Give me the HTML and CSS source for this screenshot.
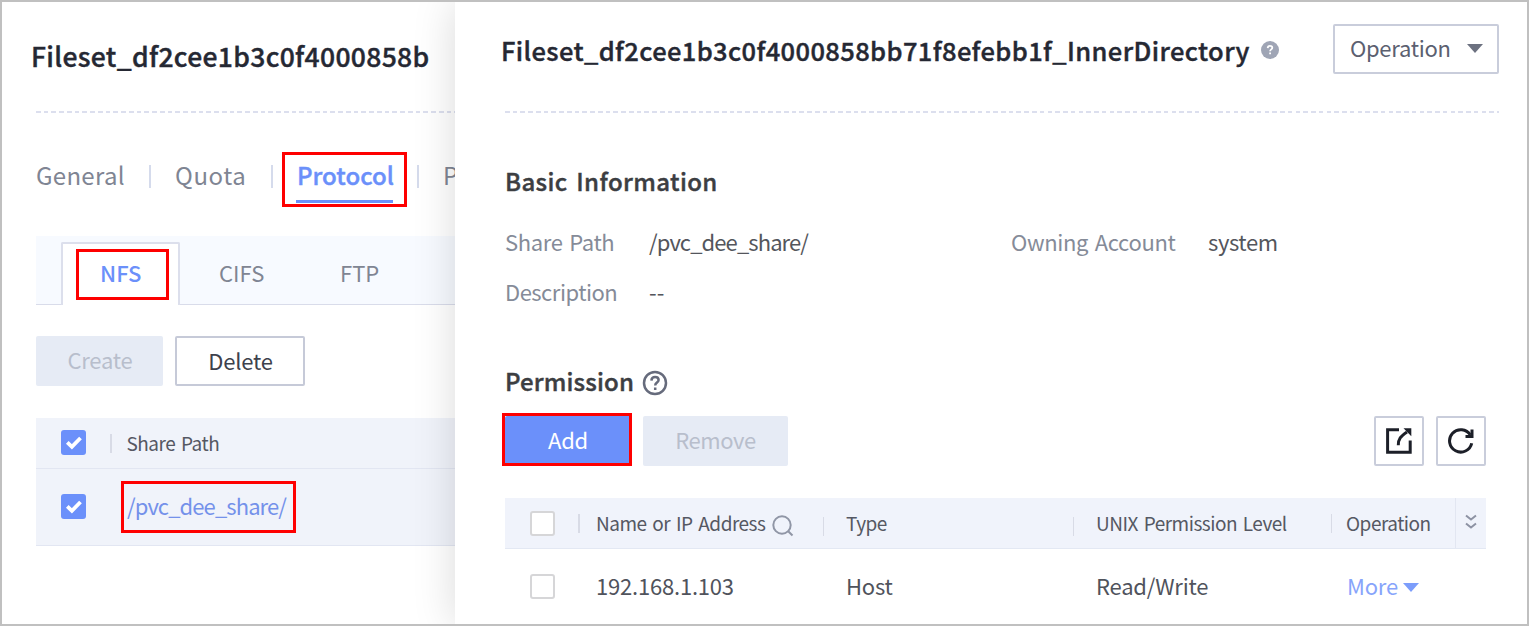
FILE: index.html
```html
<!DOCTYPE html>
<html lang="en">
<head>
<meta charset="utf-8">
<title>Fileset</title>
<link rel="stylesheet" href="styles.css">
</head>
<body>
<div class="frame">
  <section class="page">
    <h1 class="page-title">Fileset_df2cee1b3c0f4000858b</h1>
    <div class="rule"></div>
    <nav class="tabs">
      <span class="tab general">General</span>
      <span class="tab quota">Quota</span>
      <span class="tab protocol active mark">Protocol</span>
      <span class="tab next">P</span>
    </nav>
    <div class="subtabs">
      <div class="subtab active"><span class="mark">NFS</span></div>
      <div class="subtab">CIFS</div>
      <div class="subtab ftp">FTP</div>
      <div class="subtab-fill"></div>
    </div>
    <div class="actions">
      <button class="btn create" disabled>Create</button>
      <button class="btn delete">Delete</button>
    </div>
    <div class="share-table">
      <div class="share-row head">
        <span class="check"><svg viewBox="0 0 25 25"><path d="M6.300 12.400l4.600 4.400 8.600-8.800"/></svg></span>
        <span class="sep"></span>
        <span class="head-text">Share Path</span>
      </div>
      <div class="share-row">
        <span class="check"><svg viewBox="0 0 25 25"><path d="M6.300 12.400l4.600 4.400 8.600-8.800"/></svg></span>
        <span class="link mark path">/pvc_dee_share/</span>
      </div>
    </div>
  </section>

  <section class="drawer">
    <header class="drawer-head">
      <h2 class="drawer-title">Fileset_df2cee1b3c0f4000858bb71f8efebb1f_InnerDirectory</h2>
      <svg class="help-solid" viewBox="0 0 18 18"><circle cx="9" cy="9" r="9"/><path d="M6.7 7.1c.1-1.5 1-2.2 2.3-2.2s2.3.8 2.3 1.9c0 1.6-2.2 1.6-2.2 3.4M9.1 11.6v1.6"/></svg>
      <button class="btn operation">Operation<i class="caret"></i></button>
    </header>
    <div class="rule"></div>
    <h3 class="section basic">Basic Information</h3>
    <dl class="info">
      <dt>Share Path</dt><dd class="path">/pvc_dee_share/</dd>
      <dt>Owning Account</dt><dd class="owner">system</dd>
      <dt class="desc">Description</dt><dd>--</dd>
    </dl>
    <h3 class="section perm">Permission
      <svg class="help-line" viewBox="0 0 26 26"><circle cx="13" cy="13" r="11"/><path d="M9.4 10.6c.2-2.3 1.6-3.5 3.7-3.5 2 0 3.5 1.2 3.5 3 0 2.400-3.400 2.500-3.400 5.300M13.200 17.600v2.400"/></svg>
    </h3>
    <div class="toolbar">
      <button class="btn add mark">Add</button>
      <button class="btn remove" disabled>Remove</button>
      <button class="icon-btn export"><svg viewBox="0 0 26 26"><path d="M13 1.800H1.600v22.500h22.600V12.500M12.300 17.200C12.300 11 14.500 8.500 21 4"/><path class="solid" d="M17.500 .2h7.800v8z"/></svg></button>
      <button class="icon-btn"><svg viewBox="0 0 26 26"><path d="M23.700 15.200A11.200 11.200 0 1 1 22.300 7"/><path d="M24 1.500v7H17.500"/></svg></button>
    </div>
    <div class="perm-table">
      <div class="perm-row head">
        <span class="cell c-check"><span class="box"></span><span class="sep"></span></span>
        <span class="cell c-name">Name or IP Address
          <svg class="search" viewBox="0 0 22 22"><circle cx="10" cy="10" r="8.700"/><path d="M16.200 16.200l4.300 4.300"/></svg>
          <span class="sep low"></span></span>
        <span class="cell c-type">Type<span class="sep low"></span></span>
        <span class="cell c-level">UNIX Permission Level<span class="sep"></span></span>
        <span class="cell c-op">Operation</span>
        <span class="cell c-more"><svg viewBox="0 0 12 16"><path d="M1 1.500l5 4 5-4M1 9.500l5 4 5-4"/></svg></span>
      </div>
      <div class="perm-row">
        <span class="cell c-check"><span class="box"></span></span>
        <span class="cell c-name">192.168.1.103</span>
        <span class="cell c-type">Host</span>
        <span class="cell c-level">Read/Write</span>
        <span class="cell c-op link">More<i class="caret"></i></span>
      </div>
    </div>
  </section>
</div>
</body>
</html>
```
FILE: styles.css
```css
* { box-sizing: border-box; }
body {
  margin: 0;
  font: 400 22px/30px "Noto Sans CJK SC", "Noto Sans", sans-serif;
  color: #4a4d55;
  background: #fff;
}
h1, h2, h3, dl, dd { margin: 0; }
button { font: inherit; letter-spacing: inherit; padding: 0; border-radius: 2px; }
svg { display: block; fill: none; flex: none; }

.frame {
  display: flex;
  width: 1529px;
  height: 626px;
  border: 2px solid #c0c0c0;
  overflow: hidden;
  white-space: nowrap;
}
.rule {
  height: 2px;
  background: repeating-linear-gradient(90deg, #dcdfee 0 4.600px, transparent 4.600px 7.750px);
}

/* Red highlight frame laid over an element */
.mark { position: relative; }
.mark::after {
  content: "";
  position: absolute;
  inset: 0;
  border: 3px solid #fe0000;
}

/* Left page */
.page { flex: 0 0 453px; padding-left: 34px; overflow: hidden; }
.page-title {
  height: 109px;
  padding-bottom: 2px;
  margin-left: -5px;
  font-size: 26.500px;
  font-weight: 500;
  line-height: 107px;
  letter-spacing: .320px;
  color: #252833;
}
.page-title, .drawer-title, .section, .protocol { -webkit-text-stroke: .400px currentColor; }
.tabs { display: flex; height: 46px; margin-top: 44px; line-height: 35px; font-size: 24px; color: #7f8593; }
.tab { display: flex; align-items: flex-start; flex: none; letter-spacing: .300px; }
.tab::before {
  content: "";
  width: 1.500px;
  height: 23px;
  margin: 8px 24.500px 0 0;
  background: #d5dbec;
}
.general::before { display: none; }
.general { width: 113px; }
.quota { width: 122px; letter-spacing: .600px; }
.protocol { width: 146px; color: #6b90fa; font-weight: 500; letter-spacing: 0; }
.protocol { background: linear-gradient(#6b90fa, #6b90fa) 25px 43px / 97px 3px no-repeat; }
.protocol::after { inset: -5px 10px -4px 11px; }

.subtabs { display: flex; height: 69px; margin-top: 33px; background: #f7faff; line-height: 72px; color: #7f8593; }
.subtabs::before { content: ""; width: 25px; border-bottom: 1px solid #d9dcea; }
.subtab { width: 118px; padding-left: 39px; border-bottom: 1px solid #d9dcea; }
.subtab.ftp { padding-left: 42px; }
.subtab-fill { flex: 1; border-bottom: 1px solid #d9dcea; }
.subtab.active {
  width: 119px;
  height: 63px;
  margin-top: 6px;
  padding: 6px 0 0 13px;
  border: 2px solid #dcdfec;
  border-bottom: 0;
  border-radius: 2px 2px 0 0;
  background: #fff;
  color: #6b90fa;
  font-weight: 500;
}
.subtab.active span { display: block; width: 93px; height: 51px; padding-left: 24px; line-height: 47px; margin-top: -1px; }

.actions { display: flex; gap: 12px; margin-top: 31px; }
.btn { display: flex; justify-content: center; height: 50px; line-height: 47px; border: 0; letter-spacing: -.200px; }
.btn[disabled] { background: #e6ebf5; color: #b8becc; }
.create { width: 127px; padding-left: 1px; }
.delete { width: 130px; border: 2px solid #c6cad8; background: #fff; color: #3d414c; line-height: 44px; padding-left: 1px; }

.share-table { margin-top: 32px; background: #f0f3fa; }
.share-row { display: flex; align-items: center; height: 77px; padding-left: 25px; border-bottom: 1px solid #e2e6f2; }
.share-row.head { height: 51px; }
.check { width: 25px; height: 25px; border-radius: 3px; background: #6b90fa; margin-top: -1px; }
.check svg { width: 25px; height: 25px; stroke: #fff; stroke-width: 3.800; }
.sep { width: 1.500px; height: 19px; background: #d8dbe6; }
.share-row .sep { margin: 0 15px 0 24px; }
.head-text, .perm-row.head .cell { font-size: 19px; color: #555863; letter-spacing: -.500px; word-spacing: 2px; }
.link { color: #7491ea; }
.path { letter-spacing: -.900px; }
.share-row .path { height: 52px; width: 175px; margin-left: 35px; padding-left: 6px; line-height: 48px; }

/* Right drawer */
.drawer {
  position: relative;
  flex: 1;
  padding: 0 28px 0 50px;
  background: #fff;
  box-shadow: 0 0 40px rgba(0, 0, 0, .150);
}
.drawer-head { display: flex; align-items: center; height: 109px; padding-bottom: 15px; }
.drawer-title {
  margin: 2px 0 0 -4px;
  width: 751px;
  font-size: 25.500px;
  font-weight: 500;
  letter-spacing: .380px;
  color: #252833;
}
.help-solid { width: 18px; height: 18px; margin: 2px auto 0 9px; fill: #9fa5b5; }
.help-solid path { fill: none; stroke: #fff; stroke-width: 1.800; }
.operation {
  width: 166px;
  align-items: center;
  justify-content: flex-start;
  padding: 0 0 3px 15px;
  border: 2px solid #c9cddb;
  background: #fff;
  color: #5b6070;
  letter-spacing: -.300px;
}
.caret { border: 8px solid transparent; border-top: 9px solid #6c7180; border-bottom: 0; margin: 1px 0 0 16px; }
.section { display: flex; font-size: 24px; font-weight: 500; line-height: 36px; color: #3c3e42; word-spacing: 3px; }
.basic { margin-top: 50px; letter-spacing: .380px; }
.info { display: grid; grid-template-columns: 144px 362px 197px 1fr; margin-top: 17px; grid-auto-rows: 50px; line-height: 50px; color: #54565c; }
.info dt { color: #858b98; letter-spacing: -.350px; word-spacing: 2px; }
.info dt.desc { letter-spacing: -.500px; }
.info .owner { letter-spacing: -.400px; }
.perm { margin-top: 47px; letter-spacing: .150px; }
.help-line { width: 26px; height: 26px; margin: 7px 0 0 8px; stroke: #666b7c; stroke-width: 2.500; }
.toolbar { display: flex; gap: 12px; margin-top: 17px; padding-right: 13px; }
.add { width: 126px; background: #6b90fa; color: #fff; }
.add::after { inset: -3px -1px 0 -3px; }
.remove { width: 145px; letter-spacing: -.400px; }
.icon-btn { width: 50px; height: 50px; border: 2px solid #c9cddb; background: #fff; display: grid; place-items: center; }
.icon-btn svg { width: 26px; height: 26px; stroke: #1c1f28; stroke-width: 3; }
.icon-btn .solid { fill: #1c1f28; stroke: none; }
.export { margin-left: auto; }

.perm-table { width: 981px; margin-top: 32px; }
.perm-row { display: flex; height: 75px; line-height: 72px; color: #50535c; }
.perm-row.head { height: 51px; line-height: 49px; background: #f0f3fb; border-bottom: 1px solid #e3e8f3; }
.cell { display: flex; flex: none; }
.c-check { width: 91px; padding-left: 25px; align-items: center; }
.c-check .sep { margin-left: 23px; }
.box { width: 25px; height: 25px; border: 2px solid #d6d6d8; border-radius: 3px; background: #fff; }
.c-name, .c-type, .c-level { width: 250px; }
.c-op { width: 109px; }
.search { width: 22px; height: 22px; margin: 17px 0 0 7px; stroke: #9096a6; stroke-width: 2; }
.head .c-level .sep { margin: 16px 14px 0 auto; }
.head .sep.low { margin: 19px 22px 0 auto; }
.c-more { width: 31px; border-left: 1px solid #e2e6f1; justify-content: center; align-items: center; }
.c-more svg { width: 12px; height: 16px; margin-top: -2px; stroke: #8d92a3; stroke-width: 2; }
.perm-row:not(.head) .cell { letter-spacing: -.200px; }
.c-op.link { padding-left: 1px; color: #87a4fb; }
.c-op .caret { margin: 34px 0 0 5px; border-top-color: #7c9dfb; }
```
